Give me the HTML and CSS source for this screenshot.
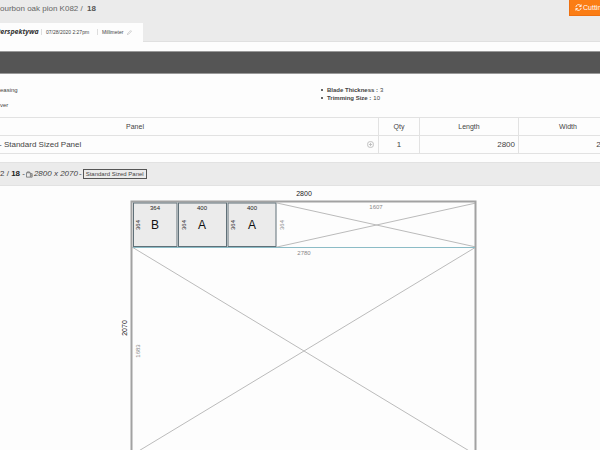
FILE: index.html
```
<!DOCTYPE html>
<html lang="en">
<head>
<meta charset="utf-8">
<title>Cutting layout</title>
<link rel="stylesheet" href="styles.css">
</head>
<body>
<header class="top">
  <div class="title-row">
    <h1 class="title">ourbon oak pion K082 / <b>18</b></h1>
    <button class="cutting" type="button">
      <svg class="refresh" viewBox="0 0 16 16" aria-hidden="true"><path d="M2 7a6 6 0 0 1 10.500-3.500L14 5M14 1v4.500H9.500M14 9a6 6 0 0 1-10.500 3.500L2 11M2 15v-4.500h4.500"/></svg>
      <span>Cutting</span>
    </button>
  </div>
  <div class="tab">
    <b class="project">Perspektywa</b>
    <span class="date">07/28/2020 2:27pm</span>
    <span class="unit">Millimeter</span>
    <svg class="pencil" viewBox="0 0 12 12" aria-hidden="true"><path d="M1 11l1-3 6-6 2 2-6 6zM9 1l2 2"/></svg>
  </div>
</header>
<main>
  <div class="bar"></div>
  <section class="info">
    <div class="info-left"><p>easing</p><p>ver</p></div>
    <ul class="info-right">
      <li><b>Blade Thickness :</b> 3</li>
      <li><b>Trimming Size :</b> 10</li>
    </ul>
  </section>
  <table class="panels">
    <colgroup><col><col class="c-qty"><col class="c-size"><col class="c-size"></colgroup>
    <thead><tr><th>Panel</th><th>Qty</th><th>Length</th><th>Width</th></tr></thead>
    <tbody>
      <tr>
        <td><div class="panel-name"><span>- Standard Sized Panel</span>
          <svg class="plus" viewBox="0 0 16 16" aria-hidden="true"><circle cx="8" cy="8" r="7"/><path d="M8 4v8M4 8h8"/></svg></div></td>
        <td class="qty">1</td><td class="num">2800</td><td class="num">2070</td>
      </tr>
    </tbody>
  </table>
  <h2 class="sheet">
    <span>2 / <b>18</b> -</span>
    <svg class="sheet-icon" viewBox="0 0 16 16" aria-hidden="true"><path d="M1 4h9v10H1zM3 4V2h5v2M10 6h4v8h-4M12 9h2M12 11h2"/></svg>
    <i>2800 x 2070</i><span>-</span><span class="badge">Standard Sized Panel</span>
  </h2>
  <svg class="layout" viewBox="0 0 600 264" role="img" aria-label="Cutting diagram">
    <g class="waste">
      <path d="M277 17L476 61M277 61L476 17M132 61L476 269M476 61L132 269"/>
    </g>
    <path class="frame" d="M131.500 270V15.500H475.500V270"/>
    <path class="cut" d="M133 61.500H475"/>
    <g class="part">
      <rect x="133.500" y="17" width="43.500" height="43.500"/>
      <rect x="178.500" y="17" width="48" height="43.500"/>
      <rect x="228" y="17" width="48" height="43.500"/>
    </g>
    <g class="letter"><text x="155" y="43">B</text><text x="202" y="43">A</text><text x="252" y="43">A</text></g>
    <g class="dim">
      <text x="155" y="24">364</text><text x="202" y="24">400</text><text x="252" y="24">400</text>
      <text transform="translate(140 39) rotate(-90)">364</text>
      <text transform="translate(186 39) rotate(-90)">364</text>
      <text transform="translate(235 39) rotate(-90)">364</text>
    </g>
    <g class="dim rest">
      <text x="376" y="23">1607</text><text x="304" y="69">2780</text>
      <text transform="translate(284 39) rotate(-90)">364</text>
      <text transform="translate(140 165) rotate(-90)">1683</text>
    </g>
    <g class="total"><text x="304" y="10">2800</text><text transform="translate(127 142) rotate(-90)">2070</text></g>
  </svg>
</main>
</body>
</html>
```
FILE: styles.css
```
body {
  margin: 0;
  overflow: hidden;
  background: #fdfdfd;
  color: #444;
  font: 8px/10px "Liberation Sans", Arial, sans-serif;
}
svg { flex: none; fill: none; }
h1, h2, p, ul { margin: 0; padding: 0; font-weight: normal; }
.top { background: #ebebeb; border-bottom: 1px solid #e0e0e0; }
.title-row { display: flex; justify-content: space-between; height: 23px; }
.title { font-size: 8px; line-height: 18px; color: #666; }
.title b { margin-left: 2px; color: #555; }
.cutting {
  display: flex;
  align-items: center;
  gap: 1px;
  width: 31px;
  height: 16px;
  padding: 0 0 0 5px;
  overflow: hidden;
  border: 1px solid #ee7010;
  border-width: 0 0 1px 1px;
  background: #fb7d14;
  color: #fff;
  font: 7px/14px "Liberation Sans", Arial, sans-serif;
}
.refresh { width: 7px; height: 7px; stroke: #fff; stroke-width: 2; }
.tab {
  display: flex;
  align-items: center;
  width: 143px;
  height: 18px;
  margin-bottom: -1px;
  padding-bottom: 1px;
  background: #fdfdfd;
  font-size: 5px;
  white-space: nowrap;
}
.project { width: 40px; margin-left: -4px; font: italic bold 7px/10px "Open Sans", sans-serif; color: #333; }
.date, .unit { padding-left: 4px; border-left: 1px solid #ddd; line-height: 6px; }
.date { width: 51px; margin-left: 5px; }
.pencil { width: 5px; height: 5px; margin-left: 4px; stroke: #999; }
.bar { height: 21px; margin-top: 9px; border: 1px solid #999; border-width: 1px 0; background: #555; }
.info { display: grid; grid-template-columns: 321px 1fr; height: 31px; padding-top: 12px; font-size: 6px; line-height: 8px; }
.info-left p { margin-bottom: 7px; }
.info-right { list-style: none; }
.info-right li { display: flex; align-items: center; gap: 2px; }
.info-right li::before { content: ""; width: 2px; height: 2px; margin-right: 2px; border-radius: 50%; background: #333; }
.panels {
  width: calc(100% + 127px);
  margin-left: -109px;
  border-collapse: collapse;
  table-layout: fixed;
}
.c-qty { width: 41px; }
.c-size { width: 99px; }
.panels th, .panels td { padding: 0 4px; border: 1px solid #e2e2e2; }
.panels th { height: 17px; font-size: 7px; font-weight: normal; }
.panels td { height: 17px; }
.panel-name { display: flex; justify-content: space-between; align-items: center; padding-left: 103px; }
.plus { width: 7px; height: 7px; stroke: #bbb; stroke-width: 2; }
.qty { text-align: center; }
.panels .num { padding-right: 3px; text-align: right; }
.sheet {
  display: flex;
  align-items: center;
  gap: 1px;
  height: 22px;
  margin-top: 8px;
  border: 1px solid #e2e2e2;
  border-width: 1px 0;
  background: #ebebeb;
  font-size: 8px;
}
.sheet b { color: #222; }
.sheet-icon { width: 7px; height: 7px; stroke: #777; stroke-width: 2; }
.badge { padding: 0 2px; border: 1px solid #555; font-size: 6px; line-height: 8px; }
.layout { display: block; width: 100%; }
.layout text { text-anchor: middle; fill: #222; }
.waste { stroke: #bbb; stroke-width: 1; }
.frame { stroke: #a2a2a2; stroke-width: 2; }
.cut { stroke: #8cbcc6; }
.part { fill: #ebebeb; stroke: #607078; }
.letter { font-size: 12px; }
.layout .letter text { fill: #111; }
.dim { font-size: 6px; }
.layout .rest text { fill: #888; }
.total { font-size: 7px; }
```
